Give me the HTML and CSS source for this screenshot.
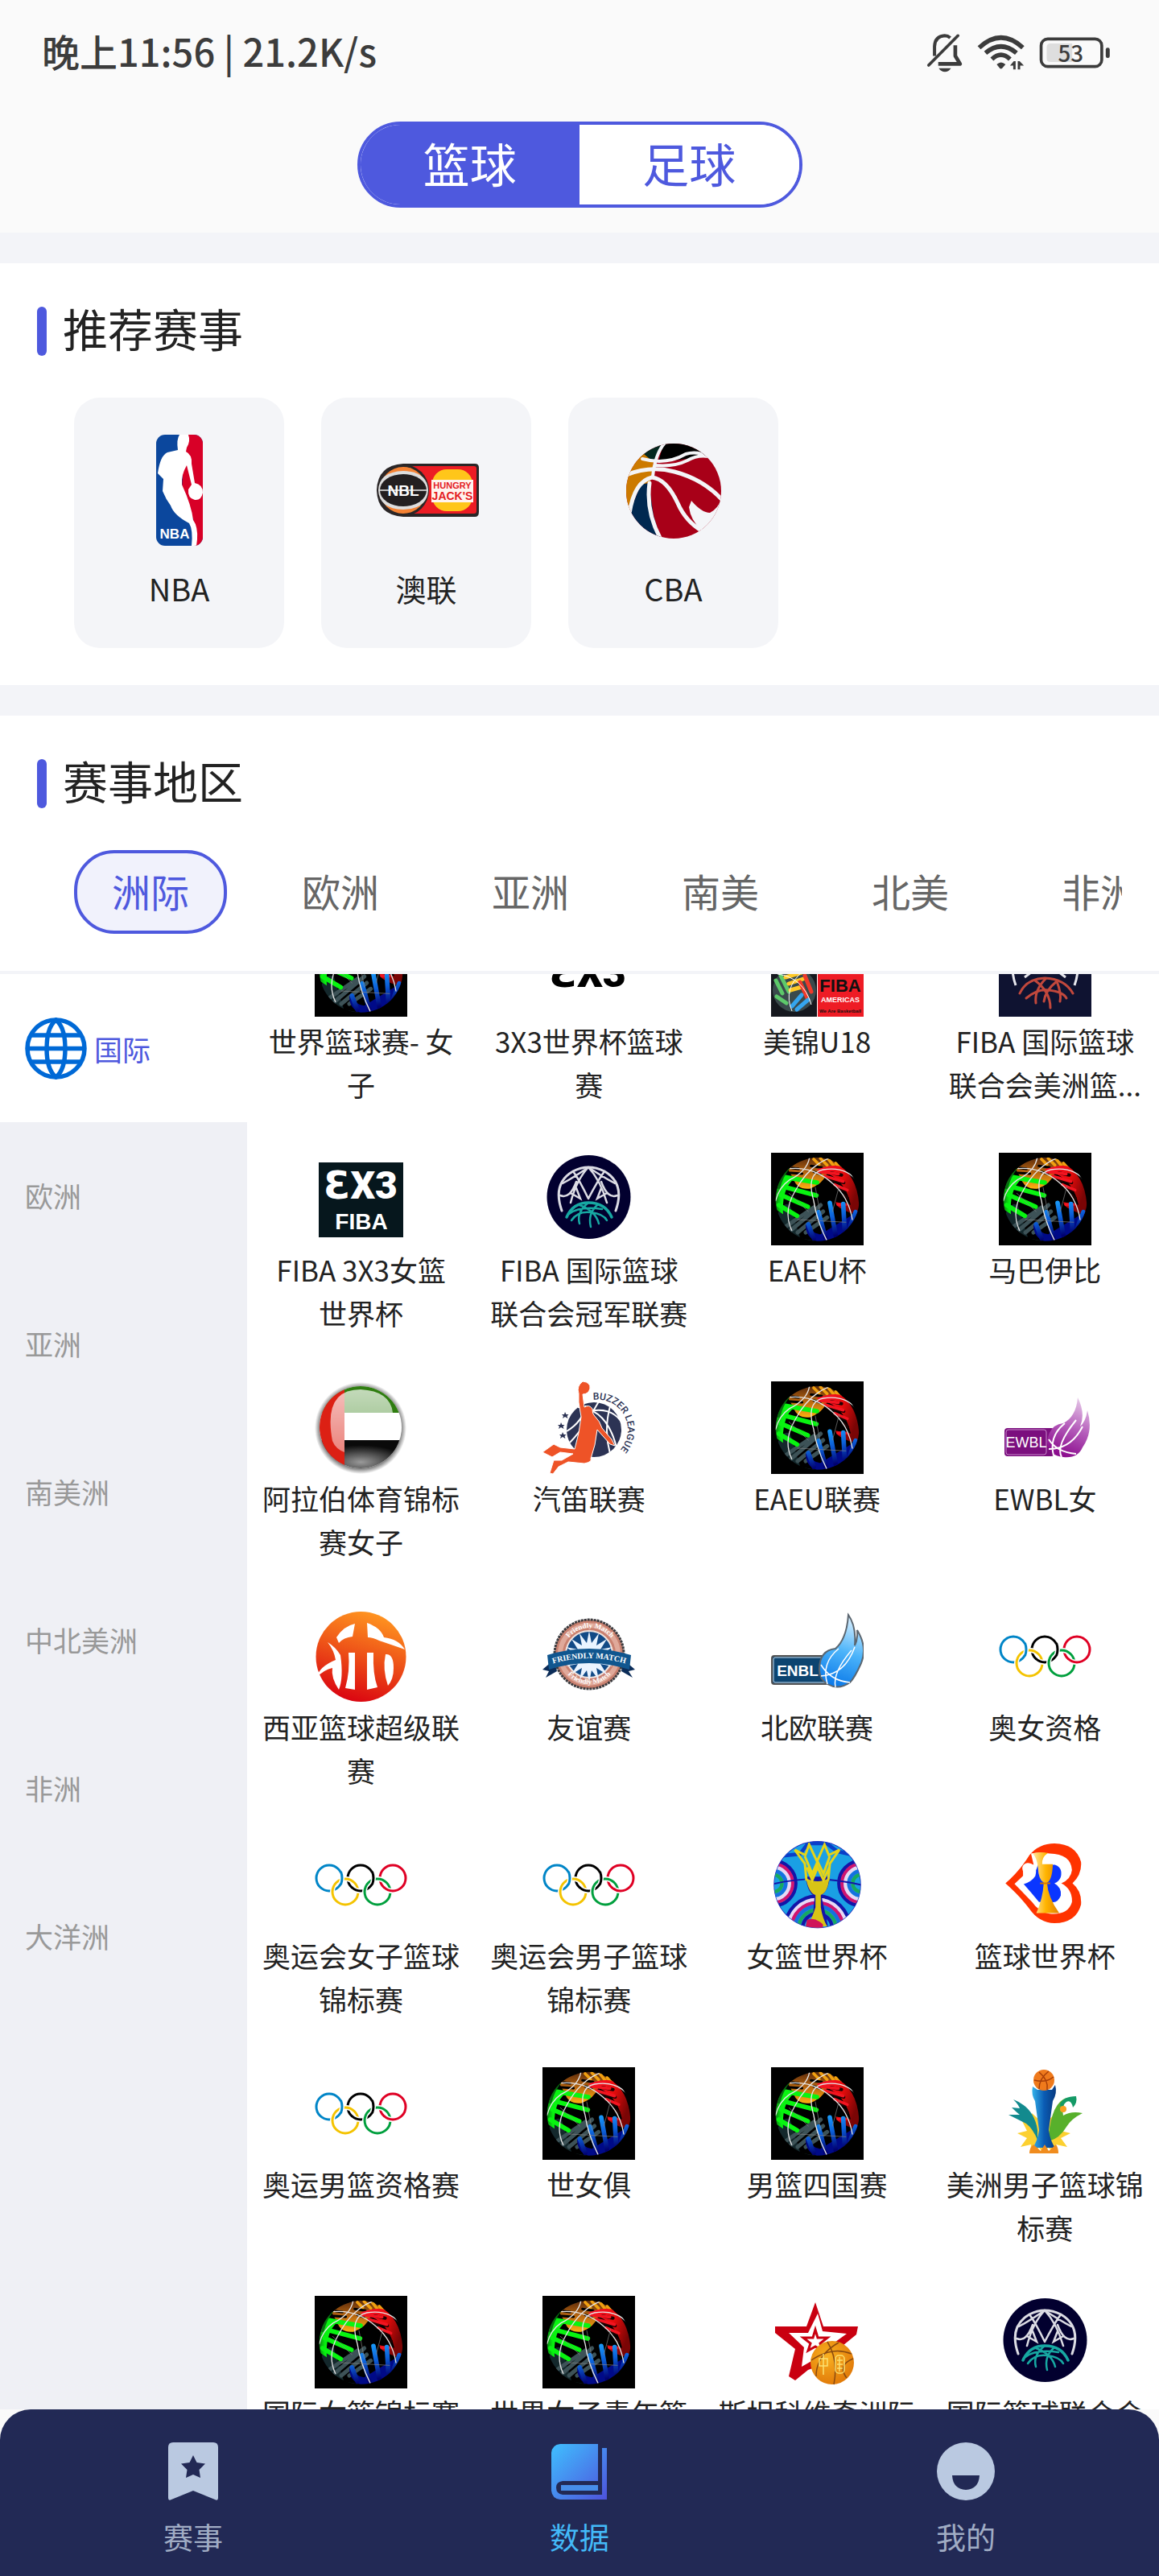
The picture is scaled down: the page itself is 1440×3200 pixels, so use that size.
FILE: index.html
```html
<!DOCTYPE html>
<html lang="zh-CN">
<head>
<meta charset="utf-8">
<meta name="viewport" content="width=device-width, initial-scale=1">
<title>数据</title>
<link rel="stylesheet" href="styles.css">
</head>
<body>
<svg class="defs" aria-hidden="true">
  <defs>
    <linearGradient id="gOrange" x1="0" y1="0" x2="0" y2="1"><stop offset="0" stop-color="#5a2a0c"/><stop offset=".5" stop-color="#b8660f"/><stop offset="1" stop-color="#ffb010"/></linearGradient>
    <linearGradient id="gBlue" x1="0" y1="0" x2=".3" y2="1"><stop offset="0" stop-color="#1ba4ff"/><stop offset=".5" stop-color="#0c5fd8"/><stop offset="1" stop-color="#000070"/></linearGradient>
    <linearGradient id="gRed" x1="0" y1="0" x2="1" y2=".4"><stop offset="0" stop-color="#ff1030"/><stop offset=".6" stop-color="#e80c0c"/><stop offset="1" stop-color="#7a0505"/></linearGradient>
    <linearGradient id="gGreen" x1="0" y1="0" x2="1" y2="0"><stop offset="0" stop-color="#0a7a12"/><stop offset=".35" stop-color="#08f010"/><stop offset="1" stop-color="#10ff18"/></linearGradient>
    <linearGradient id="gWest" x1=".6" y1="0" x2=".3" y2="1"><stop offset="0" stop-color="#ff9420"/><stop offset=".45" stop-color="#ee5418"/><stop offset="1" stop-color="#d90010"/></linearGradient>
    <linearGradient id="gFlame" x1=".6" y1="0" x2=".4" y2="1"><stop offset="0" stop-color="#dff2ff"/><stop offset=".5" stop-color="#4cb4fa"/><stop offset="1" stop-color="#0a78e8"/></linearGradient>
    <linearGradient id="gViolet" x1=".7" y1="0" x2=".4" y2="1"><stop offset="0" stop-color="#e6c8e8"/><stop offset=".5" stop-color="#b45cba"/><stop offset="1" stop-color="#8a0a8c"/></linearGradient>
    <linearGradient id="gGold" x1="0" y1="0" x2="1" y2="0"><stop offset="0" stop-color="#ffe9a8"/><stop offset=".5" stop-color="#ffb400"/><stop offset="1" stop-color="#e08000"/></linearGradient>
    <linearGradient id="gCup" x1="0" y1="0" x2="1" y2="0"><stop offset="0" stop-color="#35b3ea"/><stop offset=".5" stop-color="#0b5cb4"/><stop offset="1" stop-color="#083a80"/></linearGradient>
    <radialGradient id="gBall" cx=".4" cy=".35" r=".7"><stop offset="0" stop-color="#f9b020"/><stop offset="1" stop-color="#e07808"/></radialGradient>
    <radialGradient id="gShade"><stop offset=".86" stop-color="#000" stop-opacity=".6"/><stop offset="1" stop-color="#000" stop-opacity="0"/></radialGradient>
    <radialGradient id="gCoal" cx=".5" cy=".65" r=".5"><stop offset="0" stop-color="#9a9a9a"/><stop offset="1" stop-color="#0a0a0a"/></radialGradient>
    <linearGradient id="gGloss" x1="0" y1="0" x2="0" y2="1"><stop offset="0" stop-color="#fff" stop-opacity=".95"/><stop offset="1" stop-color="#fff" stop-opacity=".6"/></linearGradient>
    <linearGradient id="gBook" x1="0" y1="0" x2="1" y2="1"><stop offset="0" stop-color="#3fc0ff"/><stop offset="1" stop-color="#4e52dc"/></linearGradient>
    <clipPath id="cGlobe"><circle cx="194" cy="194" r="156"/></clipPath>
    <clipPath id="cUae"><circle cx="57" cy="57" r="51"/></clipPath>
    <clipPath id="cWcup"><circle cx="225" cy="215" r="162"/></clipPath>
    <clipPath id="cNba"><rect x="40" y="0" width="58" height="138" rx="11"/></clipPath>
    <clipPath id="cCba"><circle cx="69" cy="70" r="59"/></clipPath>

    <symbol id="worldball" viewBox="21 21 345 345">
      <rect x="21" y="21" width="345" height="345" fill="#000"/>
      <g clip-path="url(#cGlobe)" fill="none" stroke-linecap="round">
        <path d="M85 84Q120 48 190 37Q250 42 285 75L232 92Q214 138 165 155Q118 160 104 118Z" fill="url(#gOrange)"/>
        <path d="M180 45l20 20M205 42l25 25M235 45l20 25M262 60l14 16" stroke="#f0a010" stroke-width="11"/>
        <path d="M92 96l45 3M100 78l24 3M170 70l40 6M180 92l24 8" stroke="#000" stroke-width="9"/>
        <path d="M38 270Q60 200 92 215L130 340L195 352Q90 350 38 270Z" fill="#14282c"/>
        <path d="M70 300L180 225M95 310L206 216M120 318L215 240M150 318L230 262" stroke="#3d5257" stroke-width="15"/>
        <path d="M36 230Q32 130 80 104L104 120Q60 160 66 250Z" fill="url(#gGreen)"/>
        <path d="M74 112L192 132M62 146L190 180M58 178L158 222M50 216L118 256" stroke="#08f410" stroke-width="17"/>
        <path d="M50 150Q60 108 84 78" stroke="#087010" stroke-width="12"/>
        <path d="M350 250Q352 120 280 72Q250 62 190 84L232 98Q300 130 318 215L262 205Q262 226 320 246Z" fill="url(#gRed)"/>
        <path d="M244 96l40 8M232 120l60 12M268 152l30 10M292 180l14 10" stroke="#1c0202" stroke-width="12"/>
        <path d="M200 92L272 100M222 108L290 128M258 140L305 160M270 214h30" stroke="#f21420" stroke-width="11"/>
        <path d="M155 288Q170 320 205 325L345 240Q335 340 210 356Q150 345 150 290Z" fill="#000a88"/>
        <path d="M160 288L180 340M198 242L224 338M240 208L262 330M290 212L296 320M336 242L310 310" stroke="url(#gBlue)" stroke-width="17"/>
        <path d="M92 80Q180 72 250 135Q310 185 324 270M164 40Q155 90 90 122Q50 150 38 200M240 40Q160 70 110 165Q65 240 98 310M345 130Q300 70 215 84Q150 98 180 200Q190 270 228 346" stroke="#e6e6e6" stroke-width="4"/>
        <path d="M186 150L206 256M275 145L250 240M88 172L160 240M120 270L300 280" stroke="#888" stroke-width="2"/>
      </g>
    </symbol>

    <symbol id="rings" viewBox="0 0 115 115">
      <g fill="none" stroke-width="3">
        <circle cx="18" cy="49" r="16" stroke="#0085c7"/>
        <circle cx="57" cy="49" r="16" stroke="#000"/>
        <circle cx="97" cy="49" r="16" stroke="#df0024"/>
        <circle cx="38" cy="66" r="16" stroke="#fff" stroke-width="6"/>
        <circle cx="78" cy="66" r="16" stroke="#fff" stroke-width="6"/>
        <circle cx="38" cy="66" r="16" stroke="#f4c300"/>
        <circle cx="78" cy="66" r="16" stroke="#009f3d"/>
        <g stroke="#fff" stroke-width="6"><path d="M32.500 42Q35.500 49 32.500 56M71.500 42Q74.500 49 71.500 56M47 61.500Q51 65 56 65M87 61.500Q91 65 96 65"/></g>
        <path d="M32.500 41Q35.500 49 32.500 57" stroke="#0085c7"/>
        <path d="M71.500 41Q74.500 49 71.500 57M46 60.500Q51 65 57 65" stroke="#000"/>
        <path d="M86 60.500Q91 65 97 65" stroke="#df0024"/>
      </g>
    </symbol>

    <symbol id="champions" viewBox="0 0 115 115">
      <circle cx="57.500" cy="55" r="52" fill="#02002f"/>
      <g fill="none" stroke="#dcdce4" stroke-width="2.500" stroke-linecap="round">
        <path d="M24 72Q12 38 38 23Q57 13 77 23Q103 38 91 72" stroke-width="3"/>
        <path d="M38 23Q46 34 57 57M77 23Q69 34 57 57M57 18Q42 34 35 62M57 18Q72 34 80 62M25 38Q40 30 57 18Q75 30 90 38M22 53Q34 58 42 36M93 53Q81 58 73 36M35 50L47 57L42 44M80 50L68 57L73 44"/>
      </g>
      <g fill="none" stroke="#17a8a2" stroke-width="2.500" stroke-linecap="round">
        <path d="M30 80Q38 62 57 62Q78 62 86 80" stroke-width="3.500"/>
        <path d="M36 84Q44 72 60 74Q76 76 80 84M46 65Q66 72 70 88M57 62Q42 74 46 88M68 65Q56 76 60 92M33 76Q46 66 74 70"/>
      </g>
    </symbol>
  </defs>
</svg>

<div class="app">
  <header class="top">
    <div class="status">
      <span class="clock">晚上11:56 | 21.2K/s</span>
      <div class="status-icons">
        <svg class="ic-bell" viewBox="62 62 138 148" aria-hidden="true"><g fill="none" stroke="#3c3c3c" stroke-width="11" stroke-linecap="round" stroke-linejoin="round"><path d="M70 183L180 72"/><path d="M92 148V112Q94 74 130 72Q142 72 151 80" stroke-width="12" stroke-linecap="butt"/><path d="M170 108V148L188 178H106" stroke-width="14" stroke-linecap="butt"/></g><path d="M108 194H154Q144 208 131 208Q116 207 108 194Z" fill="#3c3c3c"/></svg>
        <svg class="ic-wifi" viewBox="250 68 178 136" aria-hidden="true"><g fill="none" stroke="#3c3c3c" stroke-width="17"><path d="M256 117Q338 42 420 117"/><path d="M280 137Q338 88 396 137"/><path d="M304 160Q338 128 372 160"/></g><path d="M322 180Q338 164 355 180L342 195Q338 198 334 195Z" fill="#3c3c3c"/><path d="M372 184L386 168H393V199H384V184ZM401 168H408L424 184H410V199H401Z" fill="#3c3c3c"/></svg>
        <svg class="ic-battery" viewBox="482 74 268 118" role="img" aria-label="电量 53"><rect x="489" y="81" width="228" height="104" rx="25" fill="none" stroke="#3c3c3c" stroke-width="11"/><path d="M524 98H606V168H524Q510 168 510 154V112Q510 98 524 98Z" fill="#dedede"/><rect x="732" y="114" width="15" height="39" rx="7" fill="#3c3c3c"/><text x="600" y="167" text-anchor="middle" class="battery-text">53</text></svg>
      </div>
    </div>
    <div class="switch">
      <button class="switch-btn is-on" type="button">篮球</button>
      <button class="switch-btn" type="button">足球</button>
    </div>
  </header>

  <section class="block">
    <h2 class="title">推荐赛事</h2>
    <div class="cards">
      <a class="card" href="#">
        <svg viewBox="0 0 138 138" aria-hidden="true"><g clip-path="url(#cNba)"><rect x="40" width="58" height="138" fill="#0b479d"/><path d="M74 0H98V138H88L86 105L72 70L74 20Z" fill="#d80027"/><path d="M69 0H80Q83 8 78 16L77 21Q85 25 84 36L88 60Q98 62 98 72Q96 82 88 81Q79 79 80 68L84 62L78 38Q71 50 72 62Q84 88 86 106Q92 114 91 130L90 138H84Q86 118 81 110Q62 100 58 88Q52 80 48 70L49 55L42 48Q45 26 54 22L67 19Q65 6 69 0Z" fill="#fff"/></g><text x="63" y="129" text-anchor="middle" class="lg-sans" font-size="17" fill="#fff">NBA</text></svg>
        <span>NBA</span>
      </a>
      <a class="card" href="#">
        <svg viewBox="0 0 138 138" aria-hidden="true"><path d="M40 36H129Q134 36 134 41V96Q134 102 129 102H40Q8 100 7 69Q8 38 40 36Z" fill="#2a2627"/><path d="M45 39H128Q131 39 131 42V95Q131 98 128 98H45Z" fill="#ec1c24"/><circle cx="40" cy="69" r="32" fill="#2a2627"/><circle cx="40" cy="69" r="29" fill="#f58233"/><path d="M9 69Q10 46 40 45Q70 46 71 69Q70 92 40 93Q10 92 9 69Z" fill="#ddd"/><ellipse cx="40" cy="69" rx="29" ry="20" fill="#231f20"/><path d="M11 69H69" stroke="#bbb" stroke-width="2"/><text x="40" y="76" text-anchor="middle" class="lg-sans" font-size="19" fill="#fff">NBL</text><rect x="76" y="43" width="50" height="52" rx="18" fill="#ffc61a"/><rect x="75" y="56" width="52" height="28" fill="#fff3ee"/><text x="101" y="67" text-anchor="middle" class="lg-sans" font-size="11" fill="#e41b22">HUNGRY</text><text x="101" y="81" text-anchor="middle" class="lg-sans" font-size="14" fill="#e41b22">JACK'S</text></svg>
        <span>澳联</span>
      </a>
      <a class="card" href="#">
        <svg viewBox="0 0 138 138" aria-hidden="true"><g clip-path="url(#cCba)"><rect width="138" height="138" fill="#a80018"/><path d="M0 0H60L45 33L30 30Z" fill="#04281f"/><path d="M60 0H138V30L109 26Q80 32 50 33Z" fill="#000"/><path d="M0 30L32 24L44 34L40 58L26 66L14 96L0 90Z" fill="#cc7a00"/><path d="M28 62L38 60L44 100L54 134L14 120L16 92Z" fill="#002850"/><g fill="none" stroke="#f4f5f8" stroke-linecap="round"><path d="M60 8Q46 22 43 52" stroke-width="4"/><path d="M30 30Q60 38 84 24Q98 20 112 27Q98 25 86 32Q70 40 46 38" stroke-width="4"/><path d="M10 50Q40 38 70 46Q108 56 132 84" stroke-width="5"/><path d="M14 98Q20 58 42 53Q60 55 74 85Q84 108 105 120" stroke-width="5"/><path d="M39 60Q34 96 54 132" stroke-width="5"/></g><path d="M91 82Q104 97 114 97Q124 92 128 80L138 80V138H104L103 118Q90 106 88 90Z" fill="#f4f5f8"/></g></svg>
        <span>CBA</span>
      </a>
    </div>
  </section>

  <section class="block region">
    <h2 class="title">赛事地区</h2>
    <div class="chips">
      <button class="chip is-on" type="button">洲际</button>
      <button class="chip" type="button">欧洲</button>
      <button class="chip" type="button">亚洲</button>
      <button class="chip" type="button">南美</button>
      <button class="chip" type="button">北美</button>
      <button class="chip" type="button">非洲</button>
    </div>
  </section>

  <main class="browse">
    <nav class="side">
      <a class="side-item is-on" href="#"><svg viewBox="0 0 77 77" aria-hidden="true"><g fill="none" stroke="#0069d6" stroke-width="5.500"><circle cx="38.500" cy="38.500" r="35.500"/><path d="M38.500 3Q27 12 27 38.500Q27 65 38.500 74Q50 65 50 38.500Q50 12 38.500 3ZM8 22H69M3 38.500H74M8 55H69"/></g></svg>国际</a>
      <a class="side-item" href="#">欧洲</a>
      <a class="side-item" href="#">亚洲</a>
      <a class="side-item" href="#">南美洲</a>
      <a class="side-item" href="#">中北美洲</a>
      <a class="side-item" href="#">非洲</a>
      <a class="side-item" href="#">大洋洲</a>
    </nav>
    <div class="scroller">
      <div class="grid">
        <a class="league" href="#"><svg viewBox="0 0 115 115"><use href="#worldball"/></svg><span>世界篮球赛- 女子</span></a>
        <a class="league" href="#"><svg viewBox="0 0 115 115"><text x="56" y="78" text-anchor="middle" class="lg-black" font-size="50" fill="#000">ƐX3</text></svg><span>3X3世界杯篮球赛</span></a>
        <a class="league" href="#"><svg viewBox="0 0 115 115"><rect width="115" height="115" fill="#15181e"/><rect x="57" width="1" height="115" fill="#fff"/><rect x="58" width="57" height="115" fill="#ee1c25"/><circle cx="29" cy="82" r="27" fill="#3a4a4c"/><g fill="none" stroke-width="5" stroke-linecap="round"><path d="M6 70L14 86M12 64L22 84M7 90l12 8" stroke="#5dc96a"/><path d="M18 66L38 60M22 74L40 68M24 82L38 78" stroke="#ffc928"/><path d="M42 64L50 84M36 72L46 94" stroke="#ef3a2a"/><path d="M26 102L38 88M32 106L46 94" stroke="#35a5ee"/></g><path d="M8 62Q40 66 50 100M40 58Q14 80 26 108" fill="none" stroke="#fff"/><text x="86" y="84" text-anchor="middle" class="lg-sans" font-size="22" fill="#111">FIBA</text><text x="86" y="97" text-anchor="middle" class="lg-sans" font-size="9" fill="#fff">AMERICAS</text><text x="86" y="110" text-anchor="middle" class="lg-sans" font-size="6" fill="#111">We Are Basketball</text></svg><span>美锦U18</span></a>
        <a class="league" href="#"><svg viewBox="0 0 115 115"><rect width="115" height="115" fill="#0f1331"/><g fill="none" stroke="#e8e8ee" stroke-width="3"><path d="M21 76Q10 45 30 30M94 76Q105 45 85 30M32 66L48 54M67 54L83 66"/></g><g fill="none" stroke="#c2483c" stroke-width="3" stroke-linecap="round"><path d="M26 86Q34 68 57 67Q82 68 92 86"/><path d="M34 92Q48 80 62 82Q80 84 84 92M45 70Q64 84 64 104M58 68Q44 82 46 98M72 71Q58 82 56 96M72 71Q78 86 76 96"/></g></svg><span>FIBA 国际篮球联合会美洲篮...</span></a>

        <a class="league" href="#"><svg viewBox="0 0 115 115"><rect x="5" y="12" width="105" height="93" fill="#06171d"/><text x="57" y="57" text-anchor="middle" class="lg-black" font-size="48" fill="#fff">ƐX3</text><text x="58" y="95" text-anchor="middle" class="lg-sans" font-size="28" fill="#fff">FIBA</text></svg><span>FIBA 3X3女篮<br>世界杯</span></a>
        <a class="league" href="#"><svg viewBox="0 0 115 115"><use href="#champions"/></svg><span>FIBA 国际篮球联合会冠军联赛</span></a>
        <a class="league" href="#"><svg viewBox="0 0 115 115"><use href="#worldball"/></svg><span>EAEU杯</span></a>
        <a class="league" href="#"><svg viewBox="0 0 115 115"><use href="#worldball"/></svg><span>马巴伊比</span></a>

        <a class="league" href="#"><svg viewBox="0 0 115 115"><circle cx="57" cy="58" r="57" fill="url(#gShade)"/><g clip-path="url(#cUae)"><rect width="115" height="115" fill="#fff"/><rect width="115" height="39" fill="#2f7d10"/><rect y="73" width="115" height="42" fill="url(#gCoal)"/><rect width="37" height="115" fill="#dc2014"/><path d="M22 74Q10 10 57 10Q94 12 97 39H37V88Q26 84 22 74Z" fill="url(#gGloss)" opacity=".75"/></g></svg><span>阿拉伯体育锦标赛女子</span></a>
        <a class="league" href="#"><svg viewBox="0 0 115 115"><circle cx="64" cy="60" r="34" fill="#2c3354"/><g fill="none" stroke="#fff" stroke-width="2"><path d="M44 32Q80 34 92 82M70 25Q50 60 34 76M84 31Q76 60 84 90M54 38Q84 30 98 50M30 62Q50 50 54 30"/></g><path d="M45 15Q42 6 50 0Q60 1 59 9Q57 16 50 16L52 32Q58 28 62 34Q62 40 64 42Q72 50 74 58L86 72L90 80L84 78L68 60Q66 80 60 96Q62 100 52 102L32 100L20 106L13 115L9 114L14 98L24 98L38 90L22 88L12 94L0 88L14 78L22 82L40 84Q46 64 48 44L45 26Z" fill="#ee5327" stroke="#fff" stroke-width="1"/><path id="buzzArc" d="M63 23A37 37 0 0 1 74 97" fill="none"/><text class="lg-buzz" font-size="12" fill="#2c3354"><textPath href="#buzzArc">BUZZER LEAGUE</textPath></text><g fill="#2c3354"><path d="M28 38l1.500 3h3l-2 2 1 3-3.500-2-3 2 1-3-2-2h3ZM23 51l1.500 3h3l-2 2 1 3-3.500-2-3 2 1-3-2-2h3ZM25 63l1.500 3h3l-2 2 1 3-3.500-2-3 2 1-3-2-2h3Z"/></g></svg><span>汽笛联赛</span></a>
        <a class="league" href="#"><svg viewBox="0 0 115 115"><use href="#worldball"/></svg><span>EAEU联赛</span></a>
        <a class="league" href="#"><svg viewBox="0 0 115 115"><rect x="7" y="58" width="62" height="35" rx="4" fill="#7b0f7e"/><rect x="9" y="60" width="50" height="31" rx="3" fill="none" stroke="#c88aca"/><text x="34" y="82" text-anchor="middle" class="lg-thin" font-size="18" fill="#fff">EWBL</text><path d="M60 76Q62 54 80 52Q96 44 98 20Q108 40 101 56Q108 50 110 36Q118 62 104 82Q98 96 80 94Q62 92 60 76Z" fill="url(#gViolet)"/><g fill="none" stroke="#fff" stroke-width="2"><path d="M62 84Q90 84 104 56M68 92Q62 68 82 52M62 72Q72 88 96 90M78 94Q70 80 96 48"/></g></svg><span>EWBL女</span></a>

        <a class="league" href="#"><svg viewBox="0 0 115 115"><circle cx="57.500" cy="58" r="56" fill="url(#gWest)"/><g fill="#fff"><path d="M27 34Q36 20 50 17L47 33Q36 34 30 41Z"/><path d="M65 16Q82 22 86 34Q104 36 112 49Q92 42 80 38Q72 34 66 34Z"/><path d="M16 40Q26 46 32 56Q36 84 30 99Q20 84 22 72Q12 74 2 84Q6 70 26 62Q24 50 16 40Z"/><path d="M42 53H50V99L38 97Q44 76 42 53Z"/><path d="M65 53H73Q72 80 78 96L65 99Z"/><path d="M88 55Q98 54 98 72Q98 86 91 94Q84 74 88 55Z"/></g></svg><span>西亚篮球超级联赛</span></a>
        <a class="league" href="#"><svg viewBox="0 0 115 115"><circle cx="58" cy="55" r="43" fill="#c9806f" stroke="#3b3b3f" stroke-width="3" stroke-dasharray="3 1"/><circle cx="58" cy="55" r="36" fill="none" stroke="#e0a99a" stroke-width="6"/><circle cx="58" cy="55" r="29" fill="#124a86" stroke="#f0e4e0" stroke-width="2"/><path d="M58 26l3 15 9-12-3 15 13-8-8 13 15-3-13 9 15 3-15 3 13 9-15-3 8 13-13-8 3 15-9-12-3 15-3-15-9 12 3-15-13 8 8-13-15 3 13-9-15-3 15-3-13-9 15 3-8-13 13 8-3-15 9 12Z" fill="#eaf4ff"/><path id="fArcTop" d="M26 55A33 33 0 0 1 92 55" fill="none"/><text class="lg-serif" font-size="9" fill="#fff" text-anchor="middle"><textPath href="#fArcTop" startOffset="50%">Friendly Match</textPath></text><path id="fArcBottom" d="M22 56A36 36 0 0 0 94 56" fill="none"/><text class="lg-serif" font-size="9" fill="#fff" text-anchor="middle"><textPath href="#fArcBottom" startOffset="50%">Friendly Match</textPath></text><path d="M14 62L0 74L8 76L4 84L18 76ZM101 62L115 74L107 76L112 84L98 76Z" fill="#0b2c58"/><path d="M6 56Q58 40 110 56L108 74Q58 58 8 74Z" fill="#10568f"/><path id="fRibbon" d="M8 68Q58 52 108 68" fill="none"/><text class="lg-serif" font-size="10" fill="#fff" text-anchor="middle"><textPath href="#fRibbon" startOffset="50%">FRIENDLY MATCH</textPath></text></svg><span>友谊赛</span></a>
        <a class="league" href="#"><svg viewBox="0 0 115 115"><rect x="1" y="57" width="70" height="35" rx="3" fill="#0c4470" stroke="#555" stroke-width="2"/><rect x="3" y="59" width="66" height="31" rx="2" fill="none" stroke="#cfe0ee"/><text x="33" y="82" text-anchor="middle" class="lg-sans" font-size="19" fill="#fff">ENBL</text><path d="M60 74Q60 50 80 48Q94 36 96 6Q106 20 104 44Q108 36 107 25Q120 46 112 66Q104 84 98 90Q84 100 70 92Q60 86 60 74Z" fill="url(#gFlame)" stroke="#5b6670" stroke-width="2"/><g fill="none" stroke="#fff" stroke-width="1.500"><path d="M62 82Q92 80 104 46M70 92Q62 66 84 48M62 68Q74 88 98 90M80 96Q76 78 100 50"/></g></svg><span>北欧联赛</span></a>
        <a class="league" href="#"><svg viewBox="0 0 115 115"><use href="#rings"/></svg><span>奥女资格</span></a>

        <a class="league" href="#"><svg viewBox="0 0 115 115"><use href="#rings"/></svg><span>奥运会女子篮球锦标赛</span></a>
        <a class="league" href="#"><svg viewBox="0 0 115 115"><use href="#rings"/></svg><span>奥运会男子篮球锦标赛</span></a>
        <a class="league" href="#"><svg viewBox="51 42 348 348"><circle cx="225" cy="215" r="164" fill="#1616b8"/><g clip-path="url(#cWcup)" fill="none"><rect x="60" y="50" width="330" height="330" fill="#1aa0e4"/><path d="M60 110L160 100L190 60H260L300 90L390 110" stroke="#0a3ec8" stroke-width="14"/><g stroke-width="13"><g id="arcL"><circle cx="60" cy="210" r="84" stroke="#1414a8"/><circle cx="60" cy="210" r="72" stroke="#d01470"/><circle cx="60" cy="210" r="60" stroke="#e8d8f4"/><circle cx="60" cy="210" r="46" stroke="#1670e0"/><circle cx="60" cy="210" r="32" stroke="#18a860"/></g><use href="#arcL" x="330"/><g><circle cx="225" cy="380" r="122" stroke="#1414a8"/><circle cx="225" cy="380" r="109" stroke="#e8d8f4"/><circle cx="225" cy="380" r="97" stroke="#d01470"/><circle cx="225" cy="380" r="84" stroke="#1670e0"/><circle cx="225" cy="380" r="70" stroke="#18a860"/><circle cx="225" cy="380" r="56" stroke="#1414a8"/></g></g><path d="M60 212Q220 175 390 216" stroke="#1414a8" stroke-width="6"/><path d="M180 185Q190 250 215 256L205 370H265L240 256Q268 236 272 185Z" fill="#1414a8"/><path d="M182 190Q192 245 218 254V300Q206 340 186 372H262Q244 340 238 300V254Q264 244 270 190Q225 215 182 190Z" fill="#d8c416"/><path d="M186 348Q214 335 246 364V378H180Z" fill="#d01458"/><path d="M140 84L180 104L194 64L224 128L252 64L268 104L308 84L272 136L266 200M140 84L178 136L184 200M178 108L206 174L226 128L248 174L272 108M186 150L206 198L226 150L248 198L270 150" stroke="#e6d418" stroke-width="9"/></g></svg><span>女篮世界杯</span></a>
        <a class="league" href="#"><svg viewBox="909 42 348 348"><path d="M934 210Q990 160 1024 104Q1060 60 1118 60Q1200 62 1218 130Q1222 176 1186 210Q1222 240 1218 290Q1200 358 1118 360Q1060 358 1024 306Q990 260 934 210Z" fill="#ff3300"/><path d="M1030 98Q1060 92 1100 98Q1180 100 1184 160Q1180 195 1144 210Q1186 232 1184 280Q1170 330 1100 324Q1060 318 1034 280L968 212L1000 182V150Q1010 130 1040 140Z" fill="#fff"/><path d="M1000 210Q1040 196 1056 140H1120Q1150 150 1142 186Q1136 204 1118 210Q1146 226 1142 256Q1130 286 1106 280L1060 280Q1030 244 1000 210Z" fill="#0a36ff"/><path d="M1036 98Q1056 90 1094 96Q1070 112 1072 138H1112Q1110 198 1090 208Q1094 264 1136 322H1050Q1074 270 1078 208Q1058 196 1056 150Q1052 112 1036 98Z" fill="url(#gGold)"/><path d="M1064 210H1102" stroke="#d87800" stroke-width="6"/><path d="M1008 168Q996 144 1018 140Q1050 144 1040 180Q1026 202 990 210" fill="none" stroke="#fff" stroke-width="13"/></svg><span>篮球世界杯</span></a>

        <a class="league" href="#"><svg viewBox="0 0 115 115"><use href="#rings"/></svg><span>奥运男篮资格赛</span></a>
        <a class="league" href="#"><svg viewBox="0 0 115 115"><use href="#worldball"/></svg><span>世女俱</span></a>
        <a class="league" href="#"><svg viewBox="0 0 115 115"><use href="#worldball"/></svg><span>男篮四国赛</span></a>
        <a class="league" href="#"><svg viewBox="0 0 115 115"><path d="M56 54l5 12 10-9-1 13 13-3-6 12 12 3-12 6 8 11-14-3 1 10-11-6-5 7-6-7-11 6 1-10-13 3 8-11-12-6 12-3-6-12 13 3-1-13 10 9Z" fill="#fcd030"/><path d="M48 78Q44 50 18 40Q24 46 26 51L16 50Q22 56 26 59L12 59Q26 66 34 70Q42 76 48 90Z" fill="#128a8e"/><path d="M62 84Q66 44 84 38Q78 52 80 60Q90 54 104 57Q90 64 84 74Q76 88 62 92Z" fill="#57b02c"/><path d="M76 46Q80 36 96 36Q98 44 92 50Q90 40 84 43Q78 48 78 54Z" fill="#149a66"/><circle cx="80" cy="52" r="4" fill="#f8a020"/><path d="M42 24Q40 34 45 42L50 78Q48 92 42 100H70Q64 92 62 78L67 42Q73 32 70 22L66 28H48Z" fill="url(#gCup)"/><path d="M38 107Q38 100 43 96L52 104L57 96L62 104L71 96Q74 100 74 107Z" fill="#f08c1e"/><circle cx="56" cy="16" r="13" fill="#ef7a1c"/><path d="M44 16Q58 20 68 12M50 6Q62 16 60 28M62 5Q50 14 50 27" fill="none" stroke="#a63d08" stroke-width="1.500"/></svg><span>美洲男子篮球锦标赛</span></a>

        <a class="league" href="#"><svg viewBox="0 0 115 115"><use href="#worldball"/></svg><span>国际女篮锦标赛</span></a>
        <a class="league" href="#"><svg viewBox="0 0 115 115"><use href="#worldball"/></svg><span>世界女子青年篮球锦标赛</span></a>
        <a class="league" href="#"><svg viewBox="0 0 115 115"><path d="M55 8L65 38H108L106 48L84 66L88 76L46 92L30 105L22 100L30 66L5 46V38H44Z" fill="#c90010"/><path d="M58 22L64 44L94 47L76 60L80 72L52 80L38 88L41 64L22 46L46 46Z" fill="#fff"/><path d="M55 42L58 52L70 52L61 59L64 68L55 63L46 68L49 59L40 52L52 52Z" fill="none" stroke="#c90010" stroke-width="3"/><circle cx="76" cy="83" r="27" fill="url(#gBall)"/><g fill="none" stroke="#8a4a10" stroke-width="1.500"><path d="M50 80Q76 62 100 72M70 57Q84 80 78 110M56 100Q56 74 84 58M94 102Q82 86 102 78"/></g><g fill="none" stroke="#fbe070" stroke-width="1.500"><rect x="60" y="78" width="10" height="9"/><path d="M65 72V98"/><rect x="80" y="74" width="11" height="22" rx="4"/><path d="M82 80h7M82 85h7M82 90h7M85 76v18"/></g></svg><span>斯坦科维奇洲际篮球冠军杯</span></a>
        <a class="league" href="#"><svg viewBox="0 0 115 115"><use href="#champions"/></svg><span>国际篮球联合会篮球冠军联赛</span></a>
      </div>
    </div>
  </main>

  <nav class="tabbar">
    <a class="tab" href="#"><svg viewBox="0 0 72 72" aria-hidden="true"><path d="M11 0H61Q67 0 67 6V69Q67 73 63 71L36 60L9 71Q5 73 5 69V6Q5 0 11 0Z" fill="#bac9e1"/><path d="M36 16L40.500 25L51 26.500L43.500 34L45 44L36 40L27 44L28.500 34L21 26.500L31.500 25Z" fill="#222955"/></svg>赛事</a>
    <a class="tab is-on" href="#"><svg viewBox="0 0 72 72" aria-hidden="true"><path d="M12 2H59V48H15Q7 49 7 56Q7 64 15 65H64V7H70V71H12Q2 70 1 60V13Q2 3 12 2Z" fill="url(#gBook)"/><path d="M13 53H59V60H13Z" fill="#478de9"/></svg>数据</a>
    <a class="tab" href="#"><svg viewBox="0 0 72 72" aria-hidden="true"><circle cx="36" cy="36" r="36" fill="#bac9e1"/><path d="M19 41H53Q52 58 36 59Q20 58 19 41Z" fill="#222955"/></svg>我的</a>
  </nav>
</div>
</body>
</html>
```
FILE: styles.css
```css
* { box-sizing: border-box; }

body {
  margin: 0;
  background: #fafafa;
  color: #222;
  font-family: "Noto Sans CJK SC", sans-serif;
}

a { color: inherit; text-decoration: none; }
button { font: inherit; cursor: pointer; }
svg { display: block; flex: none; }

.defs { position: absolute; width: 0; height: 0; }

.app {
  display: flex;
  flex-direction: column;
  height: 100vh;
  overflow: hidden;
}

/* status bar and sport switch */
.top {
  flex: none;
  padding: 30px 0 31px;
}

.status {
  display: flex;
  justify-content: space-between;
  align-items: center;
  height: 70px;
  padding: 0 60px 0 52px;
  color: #3c3c3c;
}

.clock { font-size: 47px; line-height: 66px; height: 70px; font-weight: 500; }

.status-icons { display: flex; align-items: center; gap: 17px; }
.ic-bell { width: 46px; height: 49px; }
.ic-wifi { width: 60px; height: 45px; }
.ic-battery { width: 89px; height: 39px; }
.battery-text { font: 500 84px "Noto Sans CJK SC", sans-serif; fill: #3c3c3c; }

.switch {
  display: flex;
  width: 553px;
  height: 107px;
  margin: 51px auto 0;
  border: 4px solid #4e59de;
  border-radius: 54px;
  overflow: hidden;
  background: #fff;
}

.switch-btn {
  flex: 1;
  padding: 0 0 4px;
  border: 0;
  background: #fff;
  color: #4e59de;
  font-size: 58px;
  line-height: 95px;
}

.switch-btn.is-on { background: #4e59de; color: #fff; }

/* sections */
.block {
  flex: none;
  padding: 46px;
  border-top: 38px solid #f3f4f8;
  background: #fff;
}

.region { border-bottom: 4px solid #f3f4f8; }

.title {
  display: flex;
  gap: 20px;
  height: 76px;
  margin: 0;
  font-size: 56px;
  font-weight: 400;
  line-height: 68px;
}

.title::before {
  content: "";
  align-self: center;
  width: 12px;
  height: 61px;
  border-radius: 6px;
  background: #4e59de;
}

.cards { display: flex; gap: 46px; padding: 45px 0 0 46px; }

.card {
  display: flex;
  flex-direction: column;
  align-items: center;
  gap: 24px;
  width: 261px;
  padding: 46px 0;
  border-radius: 32px;
  background: #f4f5f8;
  font-size: 38px;
  line-height: 57px;
}

.card svg { width: 138px; height: 138px; }

.chips {
  display: flex;
  gap: 46px;
  padding: 45px 0 0 46px;
  overflow: hidden;
}

.chip {
  flex: none;
  width: 190px;
  height: 104px;
  padding: 0 0 4px;
  border: 4px solid transparent;
  border-radius: 50px;
  background: none;
  color: #666;
  font-size: 48px;
  line-height: 92px;
}

.chip.is-on { border-color: #4e59de; background: #f1f2fc; color: #4e59de; }

/* region list and leagues */
.browse {
  display: flex;
  flex: 1;
  min-height: 0;
  background: #fff;
}

.side {
  flex: none;
  width: 307px;
  background: #eff0f5;
}

.side-item {
  display: flex;
  align-items: center;
  gap: 9px;
  height: 184px;
  padding: 0 0 4px 31px;
  color: #999;
  font-size: 35px;
}

.side-item.is-on { padding-bottom: 0; background: #fff; color: #4e59de; }
.side-item svg { width: 77px; height: 77px; }

.scroller { flex: 1; min-width: 0; overflow: hidden; }

/* the list rests part-way through its first row */
.grid {
  display: grid;
  grid-template-columns: repeat(4, 1fr);
  margin-top: -62px;
}

.league {
  display: flex;
  flex-direction: column;
  align-items: center;
  gap: 3px;
  height: 284px;
  padding: 0 18px;
  font-size: 35px;
  line-height: 54px;
  text-align: center;
}

.league svg { width: 115px; height: 115px; }

.league span {
  display: -webkit-box;
  -webkit-box-orient: vertical;
  -webkit-line-clamp: 2;
  overflow: hidden;
  word-break: break-all;
}

/* lettering inside the logos */
.lg-sans { font-family: "Liberation Sans", sans-serif; font-weight: 700; }
.lg-black { font-family: Roboto, "DejaVu Sans", sans-serif; font-weight: 900; }
.lg-buzz { font-family: Roboto, sans-serif; font-weight: 500; }
.lg-thin { font-family: "Liberation Sans", sans-serif; }
.lg-serif { font-family: "Liberation Serif", serif; font-weight: 700; }

/* bottom navigation */
.tabbar {
  display: flex;
  flex: none;
  height: 207px;
  border-radius: 38px 38px 0 0;
  background: #222955;
}

.tab {
  display: flex;
  flex: 1;
  flex-direction: column;
  align-items: center;
  gap: 17px;
  padding-top: 41px;
  color: #a0acc4;
  font-size: 37px;
  line-height: 56px;
}

.tab.is-on { color: #43b9f8; }
.tab svg { width: 72px; height: 72px; }
```
